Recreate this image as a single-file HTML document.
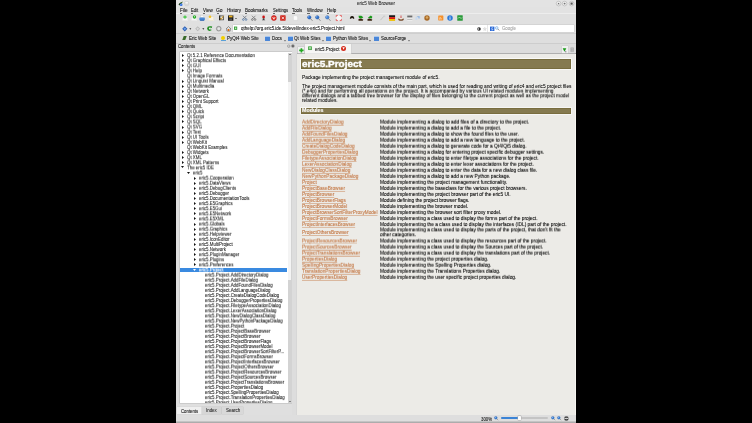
<!DOCTYPE html>
<html><head><meta charset="utf-8"><style>
html,body{margin:0;padding:0;background:#000;width:752px;height:423px;overflow:hidden;}
body{position:relative;font-family:"Liberation Sans", sans-serif;}
.t{position:absolute;white-space:nowrap;transform-origin:0 50%;-webkit-text-stroke:0.1px currentColor;}
#txt{position:absolute;left:0;top:0;width:752px;height:423px;will-change:transform;}
.tr .t{-webkit-text-stroke:0.08px currentColor;}
</style></head><body>
<div style="position:absolute;left:176px;top:0px;width:400px;height:423px;background:#dcdcdc;"></div>
<div style="position:absolute;left:176px;top:0px;width:400px;height:7px;background:#e3e3e3;"></div>
<div style="position:absolute;left:176px;top:7px;width:400px;height:7px;background:#e2e2e2;"></div>
<div style="position:absolute;left:176px;top:14px;width:400px;height:10px;background:#e0e0e0;"></div>
<div style="position:absolute;left:176px;top:13.1px;width:400px;height:0.6px;background:#ededed;"></div>
<div style="position:absolute;left:176px;top:23.5px;width:400px;height:0.6px;background:#cfcfcf;"></div>
<div style="position:absolute;left:176px;top:24px;width:400px;height:9.5px;background:#e0e0e0;"></div>
<div style="position:absolute;left:176px;top:33.3px;width:400px;height:0.6px;background:#cfcfcf;"></div>
<div style="position:absolute;left:176px;top:33.8px;width:400px;height:9.7px;background:#dedede;"></div>
<div style="position:absolute;left:176px;top:43px;width:400px;height:0.6px;background:#cdcdcd;"></div>
<div style="position:absolute;left:176px;top:43.8px;width:121px;height:377.7px;background:#dfdfdf;"></div>
<div style="position:absolute;left:179.5px;top:52px;width:112px;height:351.4px;background:#ffffff;box-shadow:0 0 0 0.5px #b8b8b8;"></div>
<div style="position:absolute;left:287.5px;top:52.5px;width:4px;height:350.5px;background:#d3d3d3;"></div>
<div style="position:absolute;left:287.6px;top:82px;width:3.8px;height:198px;background:#f4f4f4;"></div>
<div style="position:absolute;left:179.8px;top:267.8px;width:107.5px;height:4.6px;background:#3a8ae0;"></div>
<div style="position:absolute;left:177.2px;top:407px;width:24.8px;height:7px;background:#efefef;box-shadow:0 0 0 0.3px #d0d0d0;"></div>
<div style="position:absolute;left:202.2px;top:407.3px;width:19px;height:7px;background:#d6d6d6;box-shadow:0 0 0 0.4px #c2c2c2;"></div>
<div style="position:absolute;left:221.9px;top:407.3px;width:21.6px;height:7px;background:#d9d9d9;box-shadow:0 0 0 0.4px #c2c2c2;"></div>
<div style="position:absolute;left:292px;top:43.8px;width:5px;height:377.7px;background:#dddddd;"></div>
<div style="position:absolute;left:297px;top:43.8px;width:279px;height:10px;background:#dcdcdc;"></div>
<div style="position:absolute;left:297px;top:52.9px;width:279px;height:0.9px;background:#9a9a9a;"></div>
<div style="position:absolute;left:305px;top:44px;width:46px;height:9.8px;background:#f6f6f4;box-shadow:0 0 0 0.4px #c8c8c8;"></div>
<div style="position:absolute;left:297.6px;top:47px;width:6.4px;height:6.3px;background:#f0f0f0;box-shadow:0 0 0 0.4px #c0c0c0;"></div>
<div style="position:absolute;left:296.8px;top:53.8px;width:278px;height:361.2px;background:#ecebe7;box-shadow:0 0 0 0.4px #cfcfcf;"></div>
<div style="position:absolute;left:574.6px;top:53.8px;width:1.2px;height:361px;background:#f6f5f1;"></div>
<div style="position:absolute;left:301.2px;top:58.7px;width:269.8px;height:9.9px;background:#857a50;box-shadow:0 0 0 0.9px rgba(255,255,255,0.75), inset 0 0 0 0.8px #736838;"></div>
<div style="position:absolute;left:301.2px;top:107.9px;width:269.8px;height:5.7px;background:#857a50;box-shadow:0 0 0 0.9px rgba(255,255,255,0.6), inset 0 0 0 0.7px #766a3a;"></div>
<div style="position:absolute;left:176px;top:415px;width:400px;height:6.4px;background:#dedede;"></div>
<div style="position:absolute;left:176px;top:421.4px;width:400px;height:1.6px;background:#a9a9a9;background:linear-gradient(#d0d0d0,#a0a0a0);"></div>
<div style="position:absolute;left:501px;top:417.4px;width:47px;height:1.7px;background:#c4c4c4;border-radius:1px;"></div>
<div style="position:absolute;left:501px;top:417.4px;width:18.5px;height:1.7px;background:#3b84d6;border-radius:1px;"></div>
<div style="position:absolute;left:517.5px;top:416.2px;width:3.5px;height:4px;background:#fafafa;box-shadow:0 0 0 0.4px #aaa;border-radius:0.5px;"></div>
<div style="position:absolute;left:179.7px;top:12.6px;width:2.2px;height:0.45px;background:#666;"></div>
<div style="position:absolute;left:191.1px;top:12.6px;width:2.2px;height:0.45px;background:#666;"></div>
<div style="position:absolute;left:202.79999999999998px;top:12.6px;width:2.2px;height:0.45px;background:#666;"></div>
<div style="position:absolute;left:216.6px;top:12.6px;width:2.2px;height:0.45px;background:#666;"></div>
<div style="position:absolute;left:245.2px;top:12.6px;width:2.2px;height:0.45px;background:#666;"></div>
<div style="position:absolute;left:272.7px;top:12.6px;width:2.2px;height:0.45px;background:#666;"></div>
<div style="position:absolute;left:292.4px;top:12.6px;width:2.2px;height:0.45px;background:#666;"></div>
<div style="position:absolute;left:307.09999999999997px;top:12.6px;width:3px;height:0.45px;background:#666;"></div>
<div style="position:absolute;left:326.9px;top:12.6px;width:2.2px;height:0.45px;background:#666;"></div>
<div style="position:absolute;left:233.4px;top:24.8px;width:255px;height:7.5px;background:#ffffff;box-shadow:0 0 0 0.4px #c4c4c4;"></div>
<div style="position:absolute;left:488.2px;top:24.8px;width:86.2px;height:7.5px;background:#ffffff;box-shadow:0 0 0 0.4px #c4c4c4;"></div>
<svg style="position:absolute;left:182.29999999999998px;top:53.5px;overflow:visible" width="2.0" height="3.0" viewBox="0 0 12 12" preserveAspectRatio="none"><path d="M0 0 L12 6 L0 12Z" fill="#111"/></svg>
<svg style="position:absolute;left:182.29999999999998px;top:58.5px;overflow:visible" width="2.0" height="3.0" viewBox="0 0 12 12" preserveAspectRatio="none"><path d="M0 0 L12 6 L0 12Z" fill="#111"/></svg>
<svg style="position:absolute;left:182.29999999999998px;top:63.5px;overflow:visible" width="2.0" height="3.0" viewBox="0 0 12 12" preserveAspectRatio="none"><path d="M0 0 L12 6 L0 12Z" fill="#111"/></svg>
<svg style="position:absolute;left:182.29999999999998px;top:68.5px;overflow:visible" width="2.0" height="3.0" viewBox="0 0 12 12" preserveAspectRatio="none"><path d="M0 0 L12 6 L0 12Z" fill="#111"/></svg>
<svg style="position:absolute;left:182.29999999999998px;top:79.5px;overflow:visible" width="2.0" height="3.0" viewBox="0 0 12 12" preserveAspectRatio="none"><path d="M0 0 L12 6 L0 12Z" fill="#111"/></svg>
<svg style="position:absolute;left:182.29999999999998px;top:84.5px;overflow:visible" width="2.0" height="3.0" viewBox="0 0 12 12" preserveAspectRatio="none"><path d="M0 0 L12 6 L0 12Z" fill="#111"/></svg>
<svg style="position:absolute;left:182.29999999999998px;top:89.5px;overflow:visible" width="2.0" height="3.0" viewBox="0 0 12 12" preserveAspectRatio="none"><path d="M0 0 L12 6 L0 12Z" fill="#111"/></svg>
<svg style="position:absolute;left:182.29999999999998px;top:94.5px;overflow:visible" width="2.0" height="3.0" viewBox="0 0 12 12" preserveAspectRatio="none"><path d="M0 0 L12 6 L0 12Z" fill="#111"/></svg>
<svg style="position:absolute;left:182.29999999999998px;top:99.5px;overflow:visible" width="2.0" height="3.0" viewBox="0 0 12 12" preserveAspectRatio="none"><path d="M0 0 L12 6 L0 12Z" fill="#111"/></svg>
<svg style="position:absolute;left:182.29999999999998px;top:104.5px;overflow:visible" width="2.0" height="3.0" viewBox="0 0 12 12" preserveAspectRatio="none"><path d="M0 0 L12 6 L0 12Z" fill="#111"/></svg>
<svg style="position:absolute;left:182.29999999999998px;top:109.5px;overflow:visible" width="2.0" height="3.0" viewBox="0 0 12 12" preserveAspectRatio="none"><path d="M0 0 L12 6 L0 12Z" fill="#111"/></svg>
<svg style="position:absolute;left:182.29999999999998px;top:114.5px;overflow:visible" width="2.0" height="3.0" viewBox="0 0 12 12" preserveAspectRatio="none"><path d="M0 0 L12 6 L0 12Z" fill="#111"/></svg>
<svg style="position:absolute;left:182.29999999999998px;top:119.5px;overflow:visible" width="2.0" height="3.0" viewBox="0 0 12 12" preserveAspectRatio="none"><path d="M0 0 L12 6 L0 12Z" fill="#111"/></svg>
<svg style="position:absolute;left:182.29999999999998px;top:125.5px;overflow:visible" width="2.0" height="3.0" viewBox="0 0 12 12" preserveAspectRatio="none"><path d="M0 0 L12 6 L0 12Z" fill="#111"/></svg>
<svg style="position:absolute;left:182.29999999999998px;top:130.5px;overflow:visible" width="2.0" height="3.0" viewBox="0 0 12 12" preserveAspectRatio="none"><path d="M0 0 L12 6 L0 12Z" fill="#111"/></svg>
<svg style="position:absolute;left:182.29999999999998px;top:135.5px;overflow:visible" width="2.0" height="3.0" viewBox="0 0 12 12" preserveAspectRatio="none"><path d="M0 0 L12 6 L0 12Z" fill="#111"/></svg>
<svg style="position:absolute;left:182.29999999999998px;top:140.5px;overflow:visible" width="2.0" height="3.0" viewBox="0 0 12 12" preserveAspectRatio="none"><path d="M0 0 L12 6 L0 12Z" fill="#111"/></svg>
<svg style="position:absolute;left:182.29999999999998px;top:150.5px;overflow:visible" width="2.0" height="3.0" viewBox="0 0 12 12" preserveAspectRatio="none"><path d="M0 0 L12 6 L0 12Z" fill="#111"/></svg>
<svg style="position:absolute;left:182.29999999999998px;top:155.5px;overflow:visible" width="2.0" height="3.0" viewBox="0 0 12 12" preserveAspectRatio="none"><path d="M0 0 L12 6 L0 12Z" fill="#111"/></svg>
<svg style="position:absolute;left:182.29999999999998px;top:160.5px;overflow:visible" width="2.0" height="3.0" viewBox="0 0 12 12" preserveAspectRatio="none"><path d="M0 0 L12 6 L0 12Z" fill="#111"/></svg>
<svg style="position:absolute;left:181.0px;top:166.1px;overflow:visible" width="3.0" height="2.0" viewBox="0 0 12 12" preserveAspectRatio="none"><path d="M0 0 L12 0 L6 12Z" fill="#111"/></svg>
<svg style="position:absolute;left:187.0px;top:172.1px;overflow:visible" width="3.0" height="2.0" viewBox="0 0 12 12" preserveAspectRatio="none"><path d="M0 0 L12 0 L6 12Z" fill="#111"/></svg>
<svg style="position:absolute;left:194.29999999999998px;top:176.5px;overflow:visible" width="2.0" height="3.0" viewBox="0 0 12 12" preserveAspectRatio="none"><path d="M0 0 L12 6 L0 12Z" fill="#111"/></svg>
<svg style="position:absolute;left:194.29999999999998px;top:181.5px;overflow:visible" width="2.0" height="3.0" viewBox="0 0 12 12" preserveAspectRatio="none"><path d="M0 0 L12 6 L0 12Z" fill="#111"/></svg>
<svg style="position:absolute;left:194.29999999999998px;top:186.5px;overflow:visible" width="2.0" height="3.0" viewBox="0 0 12 12" preserveAspectRatio="none"><path d="M0 0 L12 6 L0 12Z" fill="#111"/></svg>
<svg style="position:absolute;left:194.29999999999998px;top:191.5px;overflow:visible" width="2.0" height="3.0" viewBox="0 0 12 12" preserveAspectRatio="none"><path d="M0 0 L12 6 L0 12Z" fill="#111"/></svg>
<svg style="position:absolute;left:194.29999999999998px;top:196.5px;overflow:visible" width="2.0" height="3.0" viewBox="0 0 12 12" preserveAspectRatio="none"><path d="M0 0 L12 6 L0 12Z" fill="#111"/></svg>
<svg style="position:absolute;left:194.29999999999998px;top:201.5px;overflow:visible" width="2.0" height="3.0" viewBox="0 0 12 12" preserveAspectRatio="none"><path d="M0 0 L12 6 L0 12Z" fill="#111"/></svg>
<svg style="position:absolute;left:194.29999999999998px;top:206.5px;overflow:visible" width="2.0" height="3.0" viewBox="0 0 12 12" preserveAspectRatio="none"><path d="M0 0 L12 6 L0 12Z" fill="#111"/></svg>
<svg style="position:absolute;left:194.29999999999998px;top:211.5px;overflow:visible" width="2.0" height="3.0" viewBox="0 0 12 12" preserveAspectRatio="none"><path d="M0 0 L12 6 L0 12Z" fill="#111"/></svg>
<svg style="position:absolute;left:194.29999999999998px;top:216.5px;overflow:visible" width="2.0" height="3.0" viewBox="0 0 12 12" preserveAspectRatio="none"><path d="M0 0 L12 6 L0 12Z" fill="#111"/></svg>
<svg style="position:absolute;left:194.29999999999998px;top:222.5px;overflow:visible" width="2.0" height="3.0" viewBox="0 0 12 12" preserveAspectRatio="none"><path d="M0 0 L12 6 L0 12Z" fill="#111"/></svg>
<svg style="position:absolute;left:194.29999999999998px;top:227.5px;overflow:visible" width="2.0" height="3.0" viewBox="0 0 12 12" preserveAspectRatio="none"><path d="M0 0 L12 6 L0 12Z" fill="#111"/></svg>
<svg style="position:absolute;left:194.29999999999998px;top:232.5px;overflow:visible" width="2.0" height="3.0" viewBox="0 0 12 12" preserveAspectRatio="none"><path d="M0 0 L12 6 L0 12Z" fill="#111"/></svg>
<svg style="position:absolute;left:194.29999999999998px;top:237.5px;overflow:visible" width="2.0" height="3.0" viewBox="0 0 12 12" preserveAspectRatio="none"><path d="M0 0 L12 6 L0 12Z" fill="#111"/></svg>
<svg style="position:absolute;left:194.29999999999998px;top:242.5px;overflow:visible" width="2.0" height="3.0" viewBox="0 0 12 12" preserveAspectRatio="none"><path d="M0 0 L12 6 L0 12Z" fill="#111"/></svg>
<svg style="position:absolute;left:194.29999999999998px;top:247.5px;overflow:visible" width="2.0" height="3.0" viewBox="0 0 12 12" preserveAspectRatio="none"><path d="M0 0 L12 6 L0 12Z" fill="#111"/></svg>
<svg style="position:absolute;left:194.29999999999998px;top:252.5px;overflow:visible" width="2.0" height="3.0" viewBox="0 0 12 12" preserveAspectRatio="none"><path d="M0 0 L12 6 L0 12Z" fill="#111"/></svg>
<svg style="position:absolute;left:194.29999999999998px;top:257.5px;overflow:visible" width="2.0" height="3.0" viewBox="0 0 12 12" preserveAspectRatio="none"><path d="M0 0 L12 6 L0 12Z" fill="#111"/></svg>
<svg style="position:absolute;left:194.29999999999998px;top:262.5px;overflow:visible" width="2.0" height="3.0" viewBox="0 0 12 12" preserveAspectRatio="none"><path d="M0 0 L12 6 L0 12Z" fill="#111"/></svg>
<svg style="position:absolute;left:193.0px;top:269.1px;overflow:visible" width="3.0" height="2.0" viewBox="0 0 12 12" preserveAspectRatio="none"><path d="M0 0 L12 0 L6 12Z" fill="#fff"/></svg>
<svg style="position:absolute;left:177.6px;top:0.8px;overflow:visible" width="5.6" height="5.4" viewBox="0 0 12 12"><path d="M1 8 Q3 3 11 1 Q8 6 3 10Z" fill="#2a5a18"/><path d="M1.5 8.5 Q3 5 6 4 L3 9Z" fill="#141a08"/><circle cx="6.8" cy="8.4" r="3" fill="#2a6ae0"/><circle cx="6.2" cy="7.6" r="1.2" fill="#7ab0ff"/></svg>
<svg style="position:absolute;left:184.2px;top:0.9px;overflow:visible" width="5.4" height="5.2" viewBox="0 0 12 12"><circle cx="6" cy="6" r="5.5" fill="#d8d8d8" stroke="#b8b8b8" stroke-width="0.6"/><ellipse cx="6" cy="4" rx="3.5" ry="2.2" fill="#f4f4f4"/></svg>
<svg style="position:absolute;left:555.6px;top:0.9px;overflow:visible" width="5.2" height="5.2" viewBox="0 0 12 12"><circle cx="6" cy="6" r="5.4" fill="#efefef" stroke="#9a9a9a" stroke-width="1"/><path d="M3.5 7.5 L6 4 L8.5 7.5Z" fill="#555"/></svg>
<svg style="position:absolute;left:562.4px;top:0.9px;overflow:visible" width="5.2" height="5.2" viewBox="0 0 12 12"><circle cx="6" cy="6" r="5.4" fill="#efefef" stroke="#9a9a9a" stroke-width="1"/><circle cx="6" cy="6" r="2.2" fill="#777"/></svg>
<svg style="position:absolute;left:569.3px;top:0.9px;overflow:visible" width="5.2" height="5.2" viewBox="0 0 12 12"><circle cx="6" cy="6" r="5.4" fill="#efefef" stroke="#9a9a9a" stroke-width="1"/><rect x="3.5" y="3.5" width="5" height="5" fill="#555"/></svg>
<svg style="position:absolute;left:182.4px;top:14.8px;overflow:visible" width="6" height="6" viewBox="0 0 12 12"><rect x="0.5" y="5" width="11" height="6.5" fill="#f6f6f6" stroke="#d8d8d8" stroke-width="0.6"/><circle cx="6" cy="4" r="3.2" fill="#3cc03c"/><circle cx="6" cy="4" r="1.3" fill="#8fe08f"/></svg>
<svg style="position:absolute;left:190.9px;top:14.8px;overflow:visible" width="6" height="6" viewBox="0 0 12 12"><rect x="0.5" y="5" width="11" height="6.5" fill="#f6f6f6" stroke="#d8d8d8" stroke-width="0.6"/><circle cx="7" cy="4" r="3.3" fill="#22aa22"/><rect x="6.4" y="1.8" width="1.2" height="3" fill="#fff"/></svg>
<svg style="position:absolute;left:199px;top:14.8px;overflow:visible" width="6.2" height="6" viewBox="0 0 12 12"><rect x="3" y="1" width="6" height="4" fill="#fafafa" stroke="#bbb" stroke-width="0.5"/><rect x="0.5" y="5" width="11" height="5.5" rx="1" fill="#4a8ad8"/><rect x="2" y="9.5" width="8" height="2" fill="#2a62b0"/></svg>
<svg style="position:absolute;left:207.8px;top:14.8px;overflow:visible" width="6" height="6" viewBox="0 0 12 12"><rect x="0.5" y="3.5" width="11" height="8" fill="#f8f2e0" stroke="#d8d0b0" stroke-width="0.5"/><circle cx="4" cy="3.5" r="2.5" fill="#f2c020"/></svg>
<svg style="position:absolute;left:218.8px;top:15.0px;overflow:visible" width="5" height="5.8" viewBox="0 0 12 12"><rect x="0.5" y="0.5" width="11" height="11" fill="#2a2a24"/><rect x="2" y="2" width="8" height="8" fill="#e8e4d8"/><path d="M2.5 6 L5 9.5 L11 1" stroke="#c89020" stroke-width="2.2" fill="none"/><rect x="0.5" y="0.5" width="2.5" height="11" fill="#1a1a14"/></svg>
<svg style="position:absolute;left:228px;top:14.8px;overflow:visible" width="5.4" height="6.2" viewBox="0 0 12 12"><rect x="0" y="0" width="12" height="12" fill="#202020"/><rect x="2" y="0.5" width="8" height="4" fill="#e8b020"/><rect x="3" y="7" width="6" height="5" fill="#555"/></svg>
<svg style="position:absolute;left:242.4px;top:14.8px;overflow:visible" width="5.4" height="6" viewBox="0 0 12 12"><path d="M2 1 L10 9 M10 1 L2 9" stroke="#606a78" stroke-width="1.6"/><circle cx="3" cy="9.5" r="2" fill="none" stroke="#3a66a0" stroke-width="1.2"/><circle cx="9" cy="9.5" r="2" fill="none" stroke="#3a66a0" stroke-width="1.2"/></svg>
<svg style="position:absolute;left:250.8px;top:14.8px;overflow:visible" width="5.4" height="6" viewBox="0 0 12 12"><path d="M2 1 L10 9 M10 1 L2 9" stroke="#707070" stroke-width="1.6"/><circle cx="3" cy="9.5" r="2" fill="none" stroke="#555" stroke-width="1.2"/><circle cx="9" cy="9.5" r="2" fill="none" stroke="#555" stroke-width="1.2"/></svg>
<svg style="position:absolute;left:260.6px;top:14.8px;overflow:visible" width="5.2" height="6" viewBox="0 0 12 12"><path d="M2 11 L6 7 L10 11Z" fill="#404040"/><rect x="4" y="5" width="4" height="3" fill="#505050"/><circle cx="6" cy="3.5" r="3" fill="#cc1010"/></svg>
<svg style="position:absolute;left:270.7px;top:14.8px;overflow:visible" width="5.8" height="6" viewBox="0 0 12 12"><circle cx="6" cy="6" r="5.6" fill="#c81818"/><circle cx="6" cy="6" r="4" fill="#e03a2a"/><path d="M3.5 4 L6 8.5 L8.5 4" stroke="#fff" stroke-width="1.5" fill="none"/></svg>
<svg style="position:absolute;left:279.6px;top:14.8px;overflow:visible" width="5.8" height="6" viewBox="0 0 12 12"><rect x="0.3" y="0.5" width="11.4" height="11" rx="1" fill="#d02a20"/><path d="M3.5 3.5 L8.5 8.5 M8.5 3.5 L3.5 8.5" stroke="#fff" stroke-width="1.5"/></svg>
<svg style="position:absolute;left:293.4px;top:14.8px;overflow:visible" width="5" height="6" viewBox="0 0 12 12"><path d="M1 0.5 H8 L11 3.5 V11.5 H1Z" fill="#fbfbfb" stroke="#c8c8c8" stroke-width="0.7"/></svg>
<svg style="position:absolute;left:307px;top:14.8px;overflow:visible" width="6" height="6.2" viewBox="0 0 12 12"><line x1="6" y1="6" x2="11" y2="11.5" stroke="#7a7a7a" stroke-width="1.6"/><circle cx="4.5" cy="4.5" r="3.6" fill="#2a6ac8" stroke="#1a4a90" stroke-width="0.5"/><circle cx="3.5" cy="3.5" r="1.2" fill="#a8d0ff"/></svg>
<svg style="position:absolute;left:315.2px;top:14.8px;overflow:visible" width="6" height="6.2" viewBox="0 0 12 12"><line x1="6" y1="6" x2="11" y2="11.5" stroke="#7a7a7a" stroke-width="1.6"/><circle cx="4.5" cy="4.5" r="3.6" fill="#3070c8" stroke="#1a4a90" stroke-width="0.5"/><circle cx="3.5" cy="3.5" r="1.2" fill="#a8d0ff"/></svg>
<svg style="position:absolute;left:325px;top:14.8px;overflow:visible" width="6" height="6.2" viewBox="0 0 12 12"><line x1="6" y1="6" x2="11" y2="11.5" stroke="#7a7a7a" stroke-width="1.6"/><circle cx="4.5" cy="4.5" r="3.6" fill="#4a88d8" stroke="#1a4a90" stroke-width="0.5"/><circle cx="3.5" cy="3.5" r="1.2" fill="#a8d0ff"/></svg>
<svg style="position:absolute;left:336px;top:14.8px;overflow:visible" width="5.6" height="6" viewBox="0 0 12 12"><rect x="0.5" y="0.5" width="11" height="11" fill="#f8f8f8"/><path d="M0.5 4 V0.5 H4 M8 0.5 H11.5 V4 M11.5 8 V11.5 H8 M4 11.5 H0.5 V8" stroke="#e04040" stroke-width="1.6" fill="none"/></svg>
<svg style="position:absolute;left:349px;top:15.4px;overflow:visible" width="6.2" height="5" viewBox="0 0 12 12"><path d="M0.5 8 Q2 2 6 2.5 Q10 2 11.5 8 Q9.5 10.5 7.5 8 Q6 6.5 4.5 8 Q2.5 10.5 0.5 8Z" fill="#201810"/></svg>
<svg style="position:absolute;left:358.4px;top:14.8px;overflow:visible" width="5.8" height="6.2" viewBox="0 0 12 12"><path d="M1 1 L7 1 L11 4 L8 7 L2 6Z" fill="#1a9a1a"/><path d="M1 8 L5 7 L11 9 L10 11.5 L1 11.5Z" fill="#3a2410"/></svg>
<svg style="position:absolute;left:367px;top:14.8px;overflow:visible" width="5.8" height="6.2" viewBox="0 0 12 12"><path d="M3 4 L8 0.8 L11 3 L10 7 L2 6Z" fill="#1a9a1a"/><path d="M1 8 L5 7 L11 9 L10 11.5 L1 11.5Z" fill="#3a2410"/></svg>
<svg style="position:absolute;left:380px;top:14.8px;overflow:visible" width="5.2" height="6" viewBox="0 0 12 12"><path d="M1 11 L9 2" stroke="#b0b0b0" stroke-width="1.4"/><path d="M8 1 L11 1 L11 4" stroke="#c0c0c0" stroke-width="1" fill="none"/></svg>
<svg style="position:absolute;left:388.8px;top:14.8px;overflow:visible" width="6.2" height="6" viewBox="0 0 12 12"><rect x="0" y="0.5" width="12" height="3.8" fill="#181818"/><rect x="0" y="4.3" width="12" height="3.8" fill="#d81a10"/><rect x="0" y="8.1" width="12" height="3.7" fill="#f0c000"/></svg>
<svg style="position:absolute;left:397.6px;top:14.8px;overflow:visible" width="6" height="6" viewBox="0 0 12 12"><ellipse cx="6" cy="8.5" rx="5.6" ry="3" fill="#6a3a18"/><ellipse cx="6" cy="7" rx="4" ry="2" fill="#f0e8e0"/><rect x="5.3" y="1" width="1.4" height="5" fill="#d02020"/></svg>
<svg style="position:absolute;left:406.8px;top:14.8px;overflow:visible" width="5.6" height="6" viewBox="0 0 12 12"><rect x="0.5" y="0.5" width="11" height="11" fill="#f4f4f4"/><rect x="0.5" y="1" width="11" height="2.2" fill="#303030"/><rect x="0.5" y="5" width="11" height="1" fill="#707070"/><rect x="0.5" y="8" width="11" height="1" fill="#707070"/></svg>
<svg style="position:absolute;left:415px;top:14.8px;overflow:visible" width="5.6" height="6" viewBox="0 0 12 12"><rect x="1" y="4" width="4" height="6" fill="#c8daf0"/><rect x="6.5" y="2" width="4.5" height="5" fill="#a8c4e8"/><path d="M4 3 L8 3" stroke="#6a9ad0" stroke-width="1"/></svg>
<svg style="position:absolute;left:424px;top:14.8px;overflow:visible" width="6" height="6" viewBox="0 0 12 12"><circle cx="6" cy="6" r="5.4" fill="#a86a28"/><circle cx="6" cy="5" r="2.6" fill="#d8a860"/></svg>
<svg style="position:absolute;left:438px;top:14.8px;overflow:visible" width="5.6" height="6" viewBox="0 0 12 12"><rect x="0.5" y="0.5" width="11" height="11" rx="1" fill="#f5902a"/><circle cx="4" cy="8" r="1.2" fill="#fff"/><path d="M3 4.5 Q7.5 4.5 7.5 9" stroke="#fff" stroke-width="1" fill="none"/></svg>
<svg style="position:absolute;left:446.8px;top:14.8px;overflow:visible" width="6" height="6" viewBox="0 0 12 12"><circle cx="6" cy="6" r="5.5" fill="#2a78d8"/><rect x="5.2" y="4.5" width="1.6" height="5" fill="#fff"/><circle cx="6" cy="2.8" r="0.9" fill="#fff"/></svg>
<svg style="position:absolute;left:457px;top:14.8px;overflow:visible" width="6" height="6" viewBox="0 0 12 12"><rect x="0.5" y="0.5" width="11" height="11" rx="1" fill="#2a9a3a"/><path d="M2 7 L5 4 L8 7 L10 5" stroke="#e8ffe8" stroke-width="1.2" fill="none"/></svg>
<div style="position:absolute;left:235.4px;top:17.6px;width:0;height:0;border-top:1.3px solid #222;border-left:1.1px solid transparent;border-right:1.1px solid transparent"></div>
<svg style="position:absolute;left:182.2px;top:26px;overflow:visible" width="5.6" height="5.2" viewBox="0 0 12 11"><path d="M0.5 6 L6 0.5 L11.5 6 L6 11.5Z" fill="#2a5ab0"/><path d="M3 6 L6 3 L9 6 L6 9Z" fill="#6aa4ec"/></svg>
<svg style="position:absolute;left:194.6px;top:26px;overflow:visible" width="5.4" height="5.2" viewBox="0 0 12 11"><path d="M0.5 6 L6 0.5 L11.5 6 L6 11.5Z" fill="#b8b8b8"/><path d="M3 6 L6 3 L9 6 L6 9Z" fill="#dadada"/></svg>
<svg style="position:absolute;left:207px;top:26px;overflow:visible" width="5.2" height="5.2" viewBox="0 0 12 12"><circle cx="6" cy="6" r="5.6" fill="#1a8a1a"/><circle cx="6.5" cy="6" r="2.3" fill="#e6e6e6"/><rect x="8" y="3.5" width="4" height="5" fill="#e6e6e6"/><path d="M7 0.5 L12 1 L10.5 5Z" fill="#1a8a1a"/></svg>
<svg style="position:absolute;left:215.5px;top:26px;overflow:visible" width="5.5" height="5.4" viewBox="0 0 12 12"><circle cx="6" cy="6" r="5.3" fill="#b0b0b0" stroke="#6a6a6a" stroke-width="1"/><circle cx="6" cy="6" r="3.2" fill="#e4e4e4"/></svg>
<svg style="position:absolute;left:225.5px;top:25.8px;overflow:visible" width="5" height="5.6" viewBox="0 0 12 12"><path d="M6 0.5 L11.5 6 H10 V11.5 H2 V6 H0.5Z" fill="#e0e0e0" stroke="#404040" stroke-width="1.2"/><rect x="4.3" y="6.5" width="3.4" height="5" fill="#e06a10"/></svg>
<svg style="position:absolute;left:234.2px;top:26px;overflow:visible" width="3.2" height="4.4" viewBox="0 0 12 12"><rect x="0" y="0" width="12" height="12" fill="#2a9a2a"/><rect x="3" y="3" width="6" height="6" fill="#bfe8bf"/></svg>
<svg style="position:absolute;left:477.4px;top:26.8px;overflow:visible" width="4" height="4" viewBox="0 0 12 12"><circle cx="6" cy="6" r="5.5" fill="#2a2a2a"/><circle cx="4" cy="6" r="2.5" fill="#e8e8e8"/></svg>
<svg style="position:absolute;left:483.2px;top:26.8px;overflow:visible" width="3.6" height="3.8" viewBox="0 0 12 12"><path d="M6 0.5 L7.8 4.5 L11.5 4.8 L8.8 7.5 L9.6 11.5 L6 9.5 L2.4 11.5 L3.2 7.5 L0.5 4.8 L4.2 4.5Z" fill="#e8e8e8" stroke="#a8a8a8" stroke-width="0.8"/></svg>
<svg style="position:absolute;left:489.6px;top:26px;overflow:visible" width="4.4" height="5.6" viewBox="0 0 12 12"><rect x="0" y="0" width="12" height="12" fill="#2a6ad8"/><path d="M8 3 Q4 2 4 5 Q8 6 8 9 Q4 10 3 8" stroke="#fff" stroke-width="1.4" fill="none"/></svg>
<svg style="position:absolute;left:494.6px;top:26px;overflow:visible" width="4.6" height="5" viewBox="0 0 12 12"><line x1="6" y1="6" x2="11" y2="11" stroke="#555" stroke-width="1.8"/><circle cx="4.5" cy="4.5" r="3.5" fill="#dff0ff" stroke="#4a8ad0" stroke-width="1.2"/></svg>
<svg style="position:absolute;left:189.29999999999998px;top:27.6px;overflow:visible" width="2.6" height="2" viewBox="0 0 12 12"><path d="M0 1 H12 L6 11Z" fill="#222"/></svg>
<svg style="position:absolute;left:201.89999999999998px;top:27.6px;overflow:visible" width="2.6" height="2" viewBox="0 0 12 12"><path d="M0 1 H12 L6 11Z" fill="#222"/></svg>
<div style="position:absolute;left:183.2px;top:36.3px;width:3.4px;height:4px;background:#3a6a2a;transform:skewX(-20deg);"></div>
<div style="position:absolute;left:221.4px;top:35.8px;width:4px;height:4px;border-radius:50%;background:#f2d000;"></div>
<div style="position:absolute;left:221.2px;top:40.2px;width:4.4px;height:0.6px;background:#5aa0d8;"></div>
<div style="position:absolute;left:264.8px;top:36.2px;width:5.2px;height:4.4px;background:#5a90e0;border-radius:0.5px;background:linear-gradient(#a8c8f0 0 25%,#4a86d8 25%);"></div>
<div style="position:absolute;left:288px;top:36.2px;width:5.2px;height:4.4px;background:#5a90e0;border-radius:0.5px;background:linear-gradient(#a8c8f0 0 25%,#4a86d8 25%);"></div>
<div style="position:absolute;left:325.9px;top:36.2px;width:5.2px;height:4.4px;background:#5a90e0;border-radius:0.5px;background:linear-gradient(#a8c8f0 0 25%,#4a86d8 25%);"></div>
<div style="position:absolute;left:374px;top:36.2px;width:5.2px;height:4.4px;background:#5a90e0;border-radius:0.5px;background:linear-gradient(#a8c8f0 0 25%,#4a86d8 25%);"></div>
<svg style="position:absolute;left:283.6px;top:40.2px;overflow:visible" width="2" height="1.6" viewBox="0 0 12 12"><path d="M0 1 H12 L6 11Z" fill="#222"/></svg>
<svg style="position:absolute;left:322px;top:40.2px;overflow:visible" width="2" height="1.6" viewBox="0 0 12 12"><path d="M0 1 H12 L6 11Z" fill="#222"/></svg>
<svg style="position:absolute;left:369px;top:40.2px;overflow:visible" width="2" height="1.6" viewBox="0 0 12 12"><path d="M0 1 H12 L6 11Z" fill="#222"/></svg>
<svg style="position:absolute;left:407.6px;top:40.2px;overflow:visible" width="2" height="1.6" viewBox="0 0 12 12"><path d="M0 1 H12 L6 11Z" fill="#222"/></svg>
<svg style="position:absolute;left:286.9px;top:44.2px;overflow:visible" width="3.6" height="4.2" viewBox="0 0 12 12"><circle cx="6" cy="6" r="5.5" fill="#9a9a9a"/><circle cx="6" cy="6" r="2.6" fill="#e8e8e8"/></svg>
<svg style="position:absolute;left:290.9px;top:44.2px;overflow:visible" width="3.8" height="4.2" viewBox="0 0 12 12"><circle cx="6" cy="6" r="5.5" fill="#8a8a8a"/><rect x="3.5" y="3.5" width="5" height="5" fill="#5a5a5a"/></svg>
<svg style="position:absolute;left:298.6px;top:47.5px;overflow:visible" width="4.8" height="4.8" viewBox="0 0 12 12"><path d="M4 0.5 H8 V4 H11.5 V8 H8 V11.5 H4 V8 H0.5 V4 H4Z" fill="#22a822"/></svg>
<svg style="position:absolute;left:308px;top:46px;overflow:visible" width="4" height="4.4" viewBox="0 0 12 12"><rect x="0.5" y="0.5" width="11" height="11" fill="#3aa03a"/><rect x="3" y="3" width="6" height="6" fill="#c8ecc8"/><rect x="4.5" y="4.5" width="3" height="3" fill="#3aa03a"/></svg>
<div style="position:absolute;left:341.0px;top:45.9px;width:5.2px;height:5.2px;border-radius:50%;background:#d42a1a;"></div>
<div style="position:absolute;left:342.4px;top:47.3px;width:2.4px;height:2.4px;background:#fff;clip-path:polygon(0 0,100% 0,50% 100%)"></div>
<div style="position:absolute;left:561.7px;top:46.2px;width:6.8px;height:7.2px;background:#f0f0f0;box-shadow:0 0 0 0.3px #c8c8c8;"></div>
<svg style="position:absolute;left:562.4px;top:47.6px;overflow:visible" width="5" height="4" viewBox="0 0 12 12"><path d="M0.5 0.5 H11.5 L6 11Z" fill="#1a9a1a"/><circle cx="10" cy="11" r="1.5" fill="#222"/></svg>
<svg style="position:absolute;left:570px;top:46.8px;overflow:visible" width="4.6" height="5.4" viewBox="0 0 12 12"><path d="M2 1 H9 V11 H2Z" fill="#d0d0d0" stroke="#8a8a8a" stroke-width="1"/><path d="M4 3 V9 M7 3 V9" stroke="#777" stroke-width="0.8"/></svg>
<svg style="position:absolute;left:493.6px;top:416px;overflow:visible" width="4.6" height="4.6" viewBox="0 0 12 12"><line x1="6" y1="6" x2="11" y2="11" stroke="#8a8a8a" stroke-width="1.8"/><circle cx="4.8" cy="4.8" r="3.8" fill="#3a80d8" stroke="#1a4a90" stroke-width="0.6"/><circle cx="3.8" cy="3.8" r="1.2" fill="#b8d8ff"/></svg>
<svg style="position:absolute;left:550.6px;top:416px;overflow:visible" width="4.6" height="4.6" viewBox="0 0 12 12"><line x1="6" y1="6" x2="11" y2="11" stroke="#8a8a8a" stroke-width="1.8"/><circle cx="4.8" cy="4.8" r="3.8" fill="#3a80d8" stroke="#1a4a90" stroke-width="0.6"/><circle cx="3.8" cy="3.8" r="1.2" fill="#b8d8ff"/></svg>
<svg style="position:absolute;left:557.4px;top:416px;overflow:visible" width="4.6" height="4.6" viewBox="0 0 12 12"><line x1="6" y1="6" x2="11" y2="11" stroke="#8a8a8a" stroke-width="1.8"/><circle cx="4.8" cy="4.8" r="3.8" fill="#3a80d8" stroke="#1a4a90" stroke-width="0.6"/><circle cx="3.8" cy="3.8" r="1.2" fill="#b8d8ff"/></svg>
<svg style="position:absolute;left:564.2px;top:415.8px;overflow:visible" width="4.8" height="4.8" viewBox="0 0 12 12"><circle cx="6" cy="6" r="5.6" fill="#3a3a3a"/><rect x="1" y="4.8" width="10" height="2.4" fill="#e0e0e0"/><path d="M6 1 V3.5 M6 8.5 V11" stroke="#ddd" stroke-width="0.8"/></svg>
<div style="position:absolute;left:288.6px;top:54.2px;width:0;height:0;border-bottom:1.2px solid #333;border-left:1px solid transparent;border-right:1px solid transparent"></div>
<div style="position:absolute;left:288.6px;top:401px;width:0;height:0;border-top:1.2px solid #333;border-left:1px solid transparent;border-right:1px solid transparent"></div>
<div style="position:absolute;left:179px;top:52px;width:108.5px;height:351.2px;overflow:hidden;will-change:transform" class="tr">
<div style="position:absolute;left:0;top:0;width:108px;height:352px;transform:translate3d(0,0.100px,0) rotate(0.0001deg)"><span id="t25" class="t" style="left:8.10px;top:1.00px;font-size:4.8px;line-height:5.52px;color:#1e1e1e;transform:scaleX(0.9158);">Qt 5.2.1 Reference Documentation</span></div>
<div style="position:absolute;left:0;top:0;width:108px;height:352px;transform:translate3d(0,0.205px,0) rotate(0.0001deg)"><span id="t26" class="t" style="left:8.10px;top:6.00px;font-size:4.8px;line-height:5.52px;color:#1e1e1e;transform:scaleX(0.9159);">Qt Graphical Effects</span></div>
<div style="position:absolute;left:0;top:0;width:108px;height:352px;transform:translate3d(0,0.310px,0) rotate(0.0001deg)"><span id="t27" class="t" style="left:8.10px;top:11.00px;font-size:4.8px;line-height:5.52px;color:#1e1e1e;transform:scaleX(0.9159);">Qt GUI</span></div>
<div style="position:absolute;left:0;top:0;width:108px;height:352px;transform:translate3d(0,0.415px,0) rotate(0.0001deg)"><span id="t28" class="t" style="left:8.10px;top:16.00px;font-size:4.8px;line-height:5.52px;color:#1e1e1e;transform:scaleX(0.9159);">Qt Help</span></div>
<div style="position:absolute;left:0;top:0;width:108px;height:352px;transform:translate3d(0,0.520px,0) rotate(0.0001deg)"><span id="t29" class="t" style="left:8.10px;top:21.00px;font-size:4.8px;line-height:5.52px;color:#1e1e1e;transform:scaleX(0.9159);">Qt Image Formats</span></div>
<div style="position:absolute;left:0;top:0;width:108px;height:352px;transform:translate3d(0,0.625px,0) rotate(0.0001deg)"><span id="t30" class="t" style="left:8.10px;top:26.00px;font-size:4.8px;line-height:5.52px;color:#1e1e1e;transform:scaleX(0.9159);">Qt Linguist Manual</span></div>
<div style="position:absolute;left:0;top:0;width:108px;height:352px;transform:translate3d(0,0.730px,0) rotate(0.0001deg)"><span id="t31" class="t" style="left:8.10px;top:31.00px;font-size:4.8px;line-height:5.52px;color:#1e1e1e;transform:scaleX(0.9159);">Qt Multimedia</span></div>
<div style="position:absolute;left:0;top:0;width:108px;height:352px;transform:translate3d(0,0.835px,0) rotate(0.0001deg)"><span id="t32" class="t" style="left:8.10px;top:36.00px;font-size:4.8px;line-height:5.52px;color:#1e1e1e;transform:scaleX(0.9159);">Qt Network</span></div>
<div style="position:absolute;left:0;top:0;width:108px;height:352px;transform:translate3d(0,0.940px,0) rotate(0.0001deg)"><span id="t33" class="t" style="left:8.10px;top:41.00px;font-size:4.8px;line-height:5.52px;color:#1e1e1e;transform:scaleX(0.9159);">Qt OpenGL</span></div>
<div style="position:absolute;left:0;top:0;width:108px;height:352px;transform:translate3d(0,0.045px,0) rotate(0.0001deg)"><span id="t34" class="t" style="left:8.10px;top:47.00px;font-size:4.8px;line-height:5.52px;color:#1e1e1e;transform:scaleX(0.9159);">Qt Print Support</span></div>
<div style="position:absolute;left:0;top:0;width:108px;height:352px;transform:translate3d(0,0.150px,0) rotate(0.0001deg)"><span id="t35" class="t" style="left:8.10px;top:52.00px;font-size:4.8px;line-height:5.52px;color:#1e1e1e;transform:scaleX(0.9159);">Qt QML</span></div>
<div style="position:absolute;left:0;top:0;width:108px;height:352px;transform:translate3d(0,0.255px,0) rotate(0.0001deg)"><span id="t36" class="t" style="left:8.10px;top:57.00px;font-size:4.8px;line-height:5.52px;color:#1e1e1e;transform:scaleX(0.9159);">Qt Quick</span></div>
<div style="position:absolute;left:0;top:0;width:108px;height:352px;transform:translate3d(0,0.360px,0) rotate(0.0001deg)"><span id="t37" class="t" style="left:8.10px;top:62.00px;font-size:4.8px;line-height:5.52px;color:#1e1e1e;transform:scaleX(0.9159);">Qt Script</span></div>
<div style="position:absolute;left:0;top:0;width:108px;height:352px;transform:translate3d(0,0.465px,0) rotate(0.0001deg)"><span id="t38" class="t" style="left:8.10px;top:67.00px;font-size:4.8px;line-height:5.52px;color:#1e1e1e;transform:scaleX(0.9159);">Qt SQL</span></div>
<div style="position:absolute;left:0;top:0;width:108px;height:352px;transform:translate3d(0,0.570px,0) rotate(0.0001deg)"><span id="t39" class="t" style="left:8.10px;top:72.00px;font-size:4.8px;line-height:5.52px;color:#1e1e1e;transform:scaleX(0.9159);">Qt SVG</span></div>
<div style="position:absolute;left:0;top:0;width:108px;height:352px;transform:translate3d(0,0.675px,0) rotate(0.0001deg)"><span id="t40" class="t" style="left:8.10px;top:77.00px;font-size:4.8px;line-height:5.52px;color:#1e1e1e;transform:scaleX(0.9159);">Qt Test</span></div>
<div style="position:absolute;left:0;top:0;width:108px;height:352px;transform:translate3d(0,0.780px,0) rotate(0.0001deg)"><span id="t41" class="t" style="left:8.10px;top:82.00px;font-size:4.8px;line-height:5.52px;color:#1e1e1e;transform:scaleX(0.9159);">Qt UI Tools</span></div>
<div style="position:absolute;left:0;top:0;width:108px;height:352px;transform:translate3d(0,0.885px,0) rotate(0.0001deg)"><span id="t42" class="t" style="left:8.10px;top:87.00px;font-size:4.8px;line-height:5.52px;color:#1e1e1e;transform:scaleX(0.9159);">Qt WebKit</span></div>
<div style="position:absolute;left:0;top:0;width:108px;height:352px;transform:translate3d(0,0.990px,0) rotate(0.0001deg)"><span id="t43" class="t" style="left:8.10px;top:92.00px;font-size:4.8px;line-height:5.52px;color:#1e1e1e;transform:scaleX(0.9159);">Qt WebKit Examples</span></div>
<div style="position:absolute;left:0;top:0;width:108px;height:352px;transform:translate3d(0,0.095px,0) rotate(0.0001deg)"><span id="t44" class="t" style="left:8.10px;top:98.00px;font-size:4.8px;line-height:5.52px;color:#1e1e1e;transform:scaleX(0.9159);">Qt Widgets</span></div>
<div style="position:absolute;left:0;top:0;width:108px;height:352px;transform:translate3d(0,0.200px,0) rotate(0.0001deg)"><span id="t45" class="t" style="left:8.10px;top:103.00px;font-size:4.8px;line-height:5.52px;color:#1e1e1e;transform:scaleX(0.9159);">Qt XML</span></div>
<div style="position:absolute;left:0;top:0;width:108px;height:352px;transform:translate3d(0,0.305px,0) rotate(0.0001deg)"><span id="t46" class="t" style="left:8.10px;top:108.00px;font-size:4.8px;line-height:5.52px;color:#1e1e1e;transform:scaleX(0.9159);">Qt XML Patterns</span></div>
<div style="position:absolute;left:0;top:0;width:108px;height:352px;transform:translate3d(0,0.410px,0) rotate(0.0001deg)"><span id="t47" class="t" style="left:8.10px;top:113.00px;font-size:4.8px;line-height:5.52px;color:#1e1e1e;transform:scaleX(0.9159);">The eric5 IDE</span></div>
<div style="position:absolute;left:0;top:0;width:108px;height:352px;transform:translate3d(0,0.515px,0) rotate(0.0001deg)"><span id="t48" class="t" style="left:14.10px;top:118.00px;font-size:4.8px;line-height:5.52px;color:#1e1e1e;transform:scaleX(0.9159);">eric5</span></div>
<div style="position:absolute;left:0;top:0;width:108px;height:352px;transform:translate3d(0,0.620px,0) rotate(0.0001deg)"><span id="t49" class="t" style="left:20.10px;top:123.00px;font-size:4.8px;line-height:5.52px;color:#1e1e1e;transform:scaleX(0.9159);">eric5.Cooperation</span></div>
<div style="position:absolute;left:0;top:0;width:108px;height:352px;transform:translate3d(0,0.725px,0) rotate(0.0001deg)"><span id="t50" class="t" style="left:20.10px;top:128.00px;font-size:4.8px;line-height:5.52px;color:#1e1e1e;transform:scaleX(0.9159);">eric5.DataViews</span></div>
<div style="position:absolute;left:0;top:0;width:108px;height:352px;transform:translate3d(0,0.830px,0) rotate(0.0001deg)"><span id="t51" class="t" style="left:20.10px;top:133.00px;font-size:4.8px;line-height:5.52px;color:#1e1e1e;transform:scaleX(0.9159);">eric5.DebugClients</span></div>
<div style="position:absolute;left:0;top:0;width:108px;height:352px;transform:translate3d(0,0.935px,0) rotate(0.0001deg)"><span id="t52" class="t" style="left:20.10px;top:138.00px;font-size:4.8px;line-height:5.52px;color:#1e1e1e;transform:scaleX(0.9159);">eric5.Debugger</span></div>
<div style="position:absolute;left:0;top:0;width:108px;height:352px;transform:translate3d(0,0.040px,0) rotate(0.0001deg)"><span id="t53" class="t" style="left:20.10px;top:144.00px;font-size:4.8px;line-height:5.52px;color:#1e1e1e;transform:scaleX(0.9159);">eric5.DocumentationTools</span></div>
<div style="position:absolute;left:0;top:0;width:108px;height:352px;transform:translate3d(0,0.145px,0) rotate(0.0001deg)"><span id="t54" class="t" style="left:20.10px;top:149.00px;font-size:4.8px;line-height:5.52px;color:#1e1e1e;transform:scaleX(0.9159);">eric5.E5Graphics</span></div>
<div style="position:absolute;left:0;top:0;width:108px;height:352px;transform:translate3d(0,0.250px,0) rotate(0.0001deg)"><span id="t55" class="t" style="left:20.10px;top:154.00px;font-size:4.8px;line-height:5.52px;color:#1e1e1e;transform:scaleX(0.9159);">eric5.E5Gui</span></div>
<div style="position:absolute;left:0;top:0;width:108px;height:352px;transform:translate3d(0,0.355px,0) rotate(0.0001deg)"><span id="t56" class="t" style="left:20.10px;top:159.00px;font-size:4.8px;line-height:5.52px;color:#1e1e1e;transform:scaleX(0.9159);">eric5.E5Network</span></div>
<div style="position:absolute;left:0;top:0;width:108px;height:352px;transform:translate3d(0,0.460px,0) rotate(0.0001deg)"><span id="t57" class="t" style="left:20.10px;top:164.00px;font-size:4.8px;line-height:5.52px;color:#1e1e1e;transform:scaleX(0.9159);">eric5.E5XML</span></div>
<div style="position:absolute;left:0;top:0;width:108px;height:352px;transform:translate3d(0,0.565px,0) rotate(0.0001deg)"><span id="t58" class="t" style="left:20.10px;top:169.00px;font-size:4.8px;line-height:5.52px;color:#1e1e1e;transform:scaleX(0.9159);">eric5.Globals</span></div>
<div style="position:absolute;left:0;top:0;width:108px;height:352px;transform:translate3d(0,0.670px,0) rotate(0.0001deg)"><span id="t59" class="t" style="left:20.10px;top:174.00px;font-size:4.8px;line-height:5.52px;color:#1e1e1e;transform:scaleX(0.9159);">eric5.Graphics</span></div>
<div style="position:absolute;left:0;top:0;width:108px;height:352px;transform:translate3d(0,0.775px,0) rotate(0.0001deg)"><span id="t60" class="t" style="left:20.10px;top:179.00px;font-size:4.8px;line-height:5.52px;color:#1e1e1e;transform:scaleX(0.9159);">eric5.Helpviewer</span></div>
<div style="position:absolute;left:0;top:0;width:108px;height:352px;transform:translate3d(0,0.880px,0) rotate(0.0001deg)"><span id="t61" class="t" style="left:20.10px;top:184.00px;font-size:4.8px;line-height:5.52px;color:#1e1e1e;transform:scaleX(0.9159);">eric5.IconEditor</span></div>
<div style="position:absolute;left:0;top:0;width:108px;height:352px;transform:translate3d(0,0.985px,0) rotate(0.0001deg)"><span id="t62" class="t" style="left:20.10px;top:189.00px;font-size:4.8px;line-height:5.52px;color:#1e1e1e;transform:scaleX(0.9159);">eric5.MultiProject</span></div>
<div style="position:absolute;left:0;top:0;width:108px;height:352px;transform:translate3d(0,0.090px,0) rotate(0.0001deg)"><span id="t63" class="t" style="left:20.10px;top:195.00px;font-size:4.8px;line-height:5.52px;color:#1e1e1e;transform:scaleX(0.9159);">eric5.Network</span></div>
<div style="position:absolute;left:0;top:0;width:108px;height:352px;transform:translate3d(0,0.195px,0) rotate(0.0001deg)"><span id="t64" class="t" style="left:20.10px;top:200.00px;font-size:4.8px;line-height:5.52px;color:#1e1e1e;transform:scaleX(0.9159);">eric5.PluginManager</span></div>
<div style="position:absolute;left:0;top:0;width:108px;height:352px;transform:translate3d(0,0.300px,0) rotate(0.0001deg)"><span id="t65" class="t" style="left:20.10px;top:205.00px;font-size:4.8px;line-height:5.52px;color:#1e1e1e;transform:scaleX(0.9159);">eric5.Plugins</span></div>
<div style="position:absolute;left:0;top:0;width:108px;height:352px;transform:translate3d(0,0.405px,0) rotate(0.0001deg)"><span id="t66" class="t" style="left:20.10px;top:210.00px;font-size:4.8px;line-height:5.52px;color:#1e1e1e;transform:scaleX(0.9159);">eric5.Preferences</span></div>
<div style="position:absolute;left:0;top:0;width:108px;height:352px;transform:translate3d(0,0.510px,0) rotate(0.0001deg)"><span id="t67" class="t" style="left:20.10px;top:215.00px;font-size:4.8px;line-height:5.52px;color:#ffffff;transform:scaleX(0.9159);">eric5.Project</span></div>
<div style="position:absolute;left:0;top:0;width:108px;height:352px;transform:translate3d(0,0.615px,0) rotate(0.0001deg)"><span id="t68" class="t" style="left:26.10px;top:220.00px;font-size:4.8px;line-height:5.52px;color:#1e1e1e;transform:scaleX(0.9159);">eric5.Project.AddDirectoryDialog</span></div>
<div style="position:absolute;left:0;top:0;width:108px;height:352px;transform:translate3d(0,0.720px,0) rotate(0.0001deg)"><span id="t69" class="t" style="left:26.10px;top:225.00px;font-size:4.8px;line-height:5.52px;color:#1e1e1e;transform:scaleX(0.9159);">eric5.Project.AddFileDialog</span></div>
<div style="position:absolute;left:0;top:0;width:108px;height:352px;transform:translate3d(0,0.825px,0) rotate(0.0001deg)"><span id="t70" class="t" style="left:26.10px;top:230.00px;font-size:4.8px;line-height:5.52px;color:#1e1e1e;transform:scaleX(0.9159);">eric5.Project.AddFoundFilesDialog</span></div>
<div style="position:absolute;left:0;top:0;width:108px;height:352px;transform:translate3d(0,0.930px,0) rotate(0.0001deg)"><span id="t71" class="t" style="left:26.10px;top:235.00px;font-size:4.8px;line-height:5.52px;color:#1e1e1e;transform:scaleX(0.9159);">eric5.Project.AddLanguageDialog</span></div>
<div style="position:absolute;left:0;top:0;width:108px;height:352px;transform:translate3d(0,0.035px,0) rotate(0.0001deg)"><span id="t72" class="t" style="left:26.10px;top:241.00px;font-size:4.8px;line-height:5.52px;color:#1e1e1e;transform:scaleX(0.9159);">eric5.Project.CreateDialogCodeDialog</span></div>
<div style="position:absolute;left:0;top:0;width:108px;height:352px;transform:translate3d(0,0.140px,0) rotate(0.0001deg)"><span id="t73" class="t" style="left:26.10px;top:246.00px;font-size:4.8px;line-height:5.52px;color:#1e1e1e;transform:scaleX(0.9159);">eric5.Project.DebuggerPropertiesDialog</span></div>
<div style="position:absolute;left:0;top:0;width:108px;height:352px;transform:translate3d(0,0.245px,0) rotate(0.0001deg)"><span id="t74" class="t" style="left:26.10px;top:251.00px;font-size:4.8px;line-height:5.52px;color:#1e1e1e;transform:scaleX(0.9159);">eric5.Project.FiletypeAssociationDialog</span></div>
<div style="position:absolute;left:0;top:0;width:108px;height:352px;transform:translate3d(0,0.350px,0) rotate(0.0001deg)"><span id="t75" class="t" style="left:26.10px;top:256.00px;font-size:4.8px;line-height:5.52px;color:#1e1e1e;transform:scaleX(0.9159);">eric5.Project.LexerAssociationDialog</span></div>
<div style="position:absolute;left:0;top:0;width:108px;height:352px;transform:translate3d(0,0.455px,0) rotate(0.0001deg)"><span id="t76" class="t" style="left:26.10px;top:261.00px;font-size:4.8px;line-height:5.52px;color:#1e1e1e;transform:scaleX(0.9159);">eric5.Project.NewDialogClassDialog</span></div>
<div style="position:absolute;left:0;top:0;width:108px;height:352px;transform:translate3d(0,0.560px,0) rotate(0.0001deg)"><span id="t77" class="t" style="left:26.10px;top:266.00px;font-size:4.8px;line-height:5.52px;color:#1e1e1e;transform:scaleX(0.9159);">eric5.Project.NewPythonPackageDialog</span></div>
<div style="position:absolute;left:0;top:0;width:108px;height:352px;transform:translate3d(0,0.665px,0) rotate(0.0001deg)"><span id="t78" class="t" style="left:26.10px;top:271.00px;font-size:4.8px;line-height:5.52px;color:#1e1e1e;transform:scaleX(0.9159);">eric5.Project.Project</span></div>
<div style="position:absolute;left:0;top:0;width:108px;height:352px;transform:translate3d(0,0.770px,0) rotate(0.0001deg)"><span id="t79" class="t" style="left:26.10px;top:276.00px;font-size:4.8px;line-height:5.52px;color:#1e1e1e;transform:scaleX(0.9159);">eric5.Project.ProjectBaseBrowser</span></div>
<div style="position:absolute;left:0;top:0;width:108px;height:352px;transform:translate3d(0,0.875px,0) rotate(0.0001deg)"><span id="t80" class="t" style="left:26.10px;top:281.00px;font-size:4.8px;line-height:5.52px;color:#1e1e1e;transform:scaleX(0.9159);">eric5.Project.ProjectBrowser</span></div>
<div style="position:absolute;left:0;top:0;width:108px;height:352px;transform:translate3d(0,0.980px,0) rotate(0.0001deg)"><span id="t81" class="t" style="left:26.10px;top:286.00px;font-size:4.8px;line-height:5.52px;color:#1e1e1e;transform:scaleX(0.9159);">eric5.Project.ProjectBrowserFlags</span></div>
<div style="position:absolute;left:0;top:0;width:108px;height:352px;transform:translate3d(0,0.085px,0) rotate(0.0001deg)"><span id="t82" class="t" style="left:26.10px;top:292.00px;font-size:4.8px;line-height:5.52px;color:#1e1e1e;transform:scaleX(0.9159);">eric5.Project.ProjectBrowserModel</span></div>
<div style="position:absolute;left:0;top:0;width:108px;height:352px;transform:translate3d(0,0.190px,0) rotate(0.0001deg)"><span id="t83" class="t" style="left:26.10px;top:297.00px;font-size:4.8px;line-height:5.52px;color:#1e1e1e;transform:scaleX(0.9159);">eric5.Project.ProjectBrowserSortFilterP...</span></div>
<div style="position:absolute;left:0;top:0;width:108px;height:352px;transform:translate3d(0,0.295px,0) rotate(0.0001deg)"><span id="t84" class="t" style="left:26.10px;top:302.00px;font-size:4.8px;line-height:5.52px;color:#1e1e1e;transform:scaleX(0.9159);">eric5.Project.ProjectFormsBrowser</span></div>
<div style="position:absolute;left:0;top:0;width:108px;height:352px;transform:translate3d(0,0.400px,0) rotate(0.0001deg)"><span id="t85" class="t" style="left:26.10px;top:307.00px;font-size:4.8px;line-height:5.52px;color:#1e1e1e;transform:scaleX(0.9159);">eric5.Project.ProjectInterfacesBrowser</span></div>
<div style="position:absolute;left:0;top:0;width:108px;height:352px;transform:translate3d(0,0.505px,0) rotate(0.0001deg)"><span id="t86" class="t" style="left:26.10px;top:312.00px;font-size:4.8px;line-height:5.52px;color:#1e1e1e;transform:scaleX(0.9159);">eric5.Project.ProjectOthersBrowser</span></div>
<div style="position:absolute;left:0;top:0;width:108px;height:352px;transform:translate3d(0,0.610px,0) rotate(0.0001deg)"><span id="t87" class="t" style="left:26.10px;top:317.00px;font-size:4.8px;line-height:5.52px;color:#1e1e1e;transform:scaleX(0.9159);">eric5.Project.ProjectResourcesBrowser</span></div>
<div style="position:absolute;left:0;top:0;width:108px;height:352px;transform:translate3d(0,0.715px,0) rotate(0.0001deg)"><span id="t88" class="t" style="left:26.10px;top:322.00px;font-size:4.8px;line-height:5.52px;color:#1e1e1e;transform:scaleX(0.9159);">eric5.Project.ProjectSourcesBrowser</span></div>
<div style="position:absolute;left:0;top:0;width:108px;height:352px;transform:translate3d(0,0.820px,0) rotate(0.0001deg)"><span id="t89" class="t" style="left:26.10px;top:327.00px;font-size:4.8px;line-height:5.52px;color:#1e1e1e;transform:scaleX(0.9159);">eric5.Project.ProjectTranslationsBrowser</span></div>
<div style="position:absolute;left:0;top:0;width:108px;height:352px;transform:translate3d(0,0.925px,0) rotate(0.0001deg)"><span id="t90" class="t" style="left:26.10px;top:332.00px;font-size:4.8px;line-height:5.52px;color:#1e1e1e;transform:scaleX(0.9159);">eric5.Project.PropertiesDialog</span></div>
<div style="position:absolute;left:0;top:0;width:108px;height:352px;transform:translate3d(0,0.030px,0) rotate(0.0001deg)"><span id="t91" class="t" style="left:26.10px;top:338.00px;font-size:4.8px;line-height:5.52px;color:#1e1e1e;transform:scaleX(0.9159);">eric5.Project.SpellingPropertiesDialog</span></div>
<div style="position:absolute;left:0;top:0;width:108px;height:352px;transform:translate3d(0,0.135px,0) rotate(0.0001deg)"><span id="t92" class="t" style="left:26.10px;top:343.00px;font-size:4.8px;line-height:5.52px;color:#1e1e1e;transform:scaleX(0.9159);">eric5.Project.TranslationPropertiesDialog</span></div>
<div style="position:absolute;left:0;top:0;width:108px;height:352px;transform:translate3d(0,0.240px,0) rotate(0.0001deg)"><span id="t93" class="t" style="left:26.10px;top:348.00px;font-size:4.8px;line-height:5.52px;color:#1e1e1e;transform:scaleX(0.9159);">eric5.Project.UserPropertiesDialog</span></div>
</div>
<div id="txt">
<span id="t0" class="t" style="left:357.10px;top:1.00px;font-size:4.6px;line-height:5.29px;color:#333;transform:scaleX(0.9785);">eric5 Web Browser</span>
<span id="t1" class="t" style="left:179.50px;top:8.00px;font-size:4.8px;line-height:5.52px;color:#1a1a1a;transform:scaleX(0.9697);">File</span>
<span id="t2" class="t" style="left:190.90px;top:8.00px;font-size:4.8px;line-height:5.52px;color:#1a1a1a;transform:scaleX(0.8574);">Edit</span>
<span id="t3" class="t" style="left:202.60px;top:8.00px;font-size:4.8px;line-height:5.52px;color:#1a1a1a;transform:scaleX(0.9503);">View</span>
<span id="t4" class="t" style="left:216.40px;top:8.00px;font-size:4.8px;line-height:5.52px;color:#1a1a1a;transform:scaleX(1.0302);">Go</span>
<span id="t5" class="t" style="left:226.90px;top:8.00px;font-size:4.8px;line-height:5.52px;color:#1a1a1a;transform:scaleX(0.9372);">History</span>
<span id="t6" class="t" style="left:245.00px;top:8.00px;font-size:4.8px;line-height:5.52px;color:#1a1a1a;transform:scaleX(0.9458);">Bookmarks</span>
<span id="t7" class="t" style="left:272.50px;top:8.00px;font-size:4.8px;line-height:5.52px;color:#1a1a1a;transform:scaleX(0.8764);">Settings</span>
<span id="t8" class="t" style="left:292.20px;top:8.00px;font-size:4.8px;line-height:5.52px;color:#1a1a1a;transform:scaleX(0.9015);">Tools</span>
<span id="t9" class="t" style="left:306.90px;top:8.00px;font-size:4.8px;line-height:5.52px;color:#1a1a1a;transform:scaleX(0.9143);">Window</span>
<span id="t10" class="t" style="left:326.70px;top:8.00px;font-size:4.8px;line-height:5.52px;color:#1a1a1a;transform:scaleX(0.9418);">Help</span>
<span id="t11" class="t" style="left:240.90px;top:26.00px;font-size:4.6px;line-height:5.29px;color:#222;transform:scaleX(0.9682);">qthelp://org.eric5.ide.5/devel/index-eric5.Project.html</span>
<span id="t12" class="t" style="left:502.00px;top:26.00px;font-size:4.6px;line-height:5.29px;color:#a8a8a8;transform:scaleX(0.9442);">Google</span>
<span id="t13" class="t" style="left:188.60px;top:36.00px;font-size:4.6px;line-height:5.29px;color:#1a1a1a;transform:scaleX(0.9838);">Eric Web Site</span>
<span id="t14" class="t" style="left:227.20px;top:36.00px;font-size:4.6px;line-height:5.29px;color:#1a1a1a;transform:scaleX(0.9752);">PyQt4 Web Site</span>
<span id="t15" class="t" style="left:272.00px;top:36.00px;font-size:4.6px;line-height:5.29px;color:#1a1a1a;transform:scaleX(0.9552);">Docs</span>
<span id="t16" class="t" style="left:293.90px;top:36.00px;font-size:4.6px;line-height:5.29px;color:#1a1a1a;transform:scaleX(0.9858);">Qt Web Sites</span>
<span id="t17" class="t" style="left:332.50px;top:36.00px;font-size:4.6px;line-height:5.29px;color:#1a1a1a;transform:scaleX(0.9660);">Python Web Sites</span>
<span id="t18" class="t" style="left:380.60px;top:36.00px;font-size:4.6px;line-height:5.29px;color:#1a1a1a;transform:scaleX(0.9525);">SourceForge</span>
<span id="t19" class="t" style="left:178.00px;top:44.00px;font-size:4.6px;line-height:5.29px;color:#222;transform:scaleX(0.9353);">Contents</span>
<span id="t20" class="t" style="left:180.80px;top:409.00px;font-size:4.6px;line-height:5.29px;color:#222;transform:scaleX(0.9353);">Contents</span>
<span id="t21" class="t" style="left:206.30px;top:408.00px;font-size:4.6px;line-height:5.29px;color:#333;transform:scaleX(0.9511);">Index</span>
<span id="t22" class="t" style="left:225.50px;top:408.00px;font-size:4.6px;line-height:5.29px;color:#333;transform:scaleX(0.9820);">Search</span>
<span id="t23" class="t" style="left:314.80px;top:47.00px;font-size:4.6px;line-height:5.29px;color:#222;transform:scaleX(0.9557);">eric5.Project</span>
<span id="t24" class="t" style="left:481.00px;top:417.00px;font-size:4.6px;line-height:5.29px;color:#222;transform:scaleX(0.9362);">300%</span>
<span id="t94" class="t" style="left:302.00px;top:59.00px;font-size:9px;line-height:10.35px;color:#ffffff;font-weight:bold;transform:scaleX(1.1086);-webkit-text-stroke:0.35px #fff;">eric5.Project</span>
<span id="t95" class="t" style="left:301.50px;top:75.00px;font-size:4.6px;line-height:5.29px;color:#000;transform:scaleX(1.0476);-webkit-text-stroke:0.05px #000;">Package implementing the project management module of eric5.</span>
<span id="t96" class="t" style="left:301.50px;top:84.00px;font-size:4.6px;line-height:5.29px;color:#000;transform:scaleX(1.0512);-webkit-text-stroke:0.05px #000;">The project management module consists of the main part, which is used for reading and writing of eric4 and eric5 project files</span>
<div style="position:absolute;left:0;top:0;width:752px;height:423px;transform:translate3d(0,0.650px,0) rotate(0.0001deg)"><span id="t97" class="t" style="left:301.50px;top:88.00px;font-size:4.6px;line-height:5.29px;color:#000;transform:scaleX(1.0512);-webkit-text-stroke:0.05px #000;">(*.e4p) and for performing all operations on the project. It is accompanied by various UI related modules implementing</span></div>
<div style="position:absolute;left:0;top:0;width:752px;height:423px;transform:translate3d(0,0.300px,0) rotate(0.0001deg)"><span id="t98" class="t" style="left:301.50px;top:93.00px;font-size:4.6px;line-height:5.29px;color:#000;transform:scaleX(1.0512);-webkit-text-stroke:0.05px #000;">different dialogs and a tabbed tree browser for the display of files belonging to the current project as well as the project model</span></div>
<div style="position:absolute;left:0;top:0;width:752px;height:423px;transform:translate3d(0,0.950px,0) rotate(0.0001deg)"><span id="t99" class="t" style="left:301.50px;top:97.00px;font-size:4.6px;line-height:5.29px;color:#000;transform:scaleX(1.0512);-webkit-text-stroke:0.05px #000;">related modules.</span></div>
<span id="t100" class="t" style="left:302.00px;top:108.00px;font-size:4.6px;line-height:5.29px;color:#ffffff;font-weight:bold;transform:scaleX(1.1534);">Modules</span>
<div style="position:absolute;left:0;top:0;width:752px;height:423px;transform:translate3d(0,0.600px,0) rotate(0.0001deg)"><span id="t101" class="t" style="left:302.30px;top:119.00px;font-size:4.6px;line-height:5.29px;color:#c47a48;transform:scaleX(1.0511);text-decoration:underline;text-decoration-color:rgba(196,122,72,0.45);">AddDirectoryDialog</span></div>
<div style="position:absolute;left:0;top:0;width:752px;height:423px;transform:translate3d(0,0.600px,0) rotate(0.0001deg)"><span id="t102" class="t" style="left:379.80px;top:119.00px;font-size:4.6px;line-height:5.29px;color:#000;transform:scaleX(1.0546);-webkit-text-stroke:0.07px #000;">Module implementing a dialog to add files of a directory to the project.</span></div>
<div style="position:absolute;left:0;top:0;width:752px;height:423px;transform:translate3d(0,0.630px,0) rotate(0.0001deg)"><span id="t103" class="t" style="left:302.30px;top:125.00px;font-size:4.6px;line-height:5.29px;color:#c47a48;transform:scaleX(1.0354);text-decoration:underline;text-decoration-color:rgba(196,122,72,0.45);">AddFileDialog</span></div>
<div style="position:absolute;left:0;top:0;width:752px;height:423px;transform:translate3d(0,0.630px,0) rotate(0.0001deg)"><span id="t104" class="t" style="left:379.80px;top:125.00px;font-size:4.6px;line-height:5.29px;color:#000;transform:scaleX(1.0512);-webkit-text-stroke:0.07px #000;">Module implementing a dialog to add a file to the project.</span></div>
<div style="position:absolute;left:0;top:0;width:752px;height:423px;transform:translate3d(0,0.660px,0) rotate(0.0001deg)"><span id="t105" class="t" style="left:302.30px;top:131.00px;font-size:4.6px;line-height:5.29px;color:#c47a48;transform:scaleX(1.0354);text-decoration:underline;text-decoration-color:rgba(196,122,72,0.45);">AddFoundFilesDialog</span></div>
<div style="position:absolute;left:0;top:0;width:752px;height:423px;transform:translate3d(0,0.660px,0) rotate(0.0001deg)"><span id="t106" class="t" style="left:379.80px;top:131.00px;font-size:4.6px;line-height:5.29px;color:#000;transform:scaleX(1.0512);-webkit-text-stroke:0.07px #000;">Module implementing a dialog to show the found files to the user.</span></div>
<div style="position:absolute;left:0;top:0;width:752px;height:423px;transform:translate3d(0,0.690px,0) rotate(0.0001deg)"><span id="t107" class="t" style="left:302.30px;top:137.00px;font-size:4.6px;line-height:5.29px;color:#c47a48;transform:scaleX(1.0354);text-decoration:underline;text-decoration-color:rgba(196,122,72,0.45);">AddLanguageDialog</span></div>
<div style="position:absolute;left:0;top:0;width:752px;height:423px;transform:translate3d(0,0.690px,0) rotate(0.0001deg)"><span id="t108" class="t" style="left:379.80px;top:137.00px;font-size:4.6px;line-height:5.29px;color:#000;transform:scaleX(1.0512);-webkit-text-stroke:0.07px #000;">Module implementing a dialog to add a new language to the project.</span></div>
<div style="position:absolute;left:0;top:0;width:752px;height:423px;transform:translate3d(0,0.720px,0) rotate(0.0001deg)"><span id="t109" class="t" style="left:302.30px;top:143.00px;font-size:4.6px;line-height:5.29px;color:#c47a48;transform:scaleX(1.0354);text-decoration:underline;text-decoration-color:rgba(196,122,72,0.45);">CreateDialogCodeDialog</span></div>
<div style="position:absolute;left:0;top:0;width:752px;height:423px;transform:translate3d(0,0.720px,0) rotate(0.0001deg)"><span id="t110" class="t" style="left:379.80px;top:143.00px;font-size:4.6px;line-height:5.29px;color:#000;transform:scaleX(1.0512);-webkit-text-stroke:0.07px #000;">Module implementing a dialog to generate code for a Qt4/Qt5 dialog.</span></div>
<div style="position:absolute;left:0;top:0;width:752px;height:423px;transform:translate3d(0,0.750px,0) rotate(0.0001deg)"><span id="t111" class="t" style="left:302.30px;top:149.00px;font-size:4.6px;line-height:5.29px;color:#c47a48;transform:scaleX(1.0354);text-decoration:underline;text-decoration-color:rgba(196,122,72,0.45);">DebuggerPropertiesDialog</span></div>
<div style="position:absolute;left:0;top:0;width:752px;height:423px;transform:translate3d(0,0.750px,0) rotate(0.0001deg)"><span id="t112" class="t" style="left:379.80px;top:149.00px;font-size:4.6px;line-height:5.29px;color:#000;transform:scaleX(1.0512);-webkit-text-stroke:0.07px #000;">Module implementing a dialog for entering project specific debugger settings.</span></div>
<div style="position:absolute;left:0;top:0;width:752px;height:423px;transform:translate3d(0,0.780px,0) rotate(0.0001deg)"><span id="t113" class="t" style="left:302.30px;top:155.00px;font-size:4.6px;line-height:5.29px;color:#c47a48;transform:scaleX(1.0354);text-decoration:underline;text-decoration-color:rgba(196,122,72,0.45);">FiletypeAssociationDialog</span></div>
<div style="position:absolute;left:0;top:0;width:752px;height:423px;transform:translate3d(0,0.780px,0) rotate(0.0001deg)"><span id="t114" class="t" style="left:379.80px;top:155.00px;font-size:4.6px;line-height:5.29px;color:#000;transform:scaleX(1.0512);-webkit-text-stroke:0.07px #000;">Module implementing a dialog to enter filetype associations for the project.</span></div>
<div style="position:absolute;left:0;top:0;width:752px;height:423px;transform:translate3d(0,0.810px,0) rotate(0.0001deg)"><span id="t115" class="t" style="left:302.30px;top:161.00px;font-size:4.6px;line-height:5.29px;color:#c47a48;transform:scaleX(1.0354);text-decoration:underline;text-decoration-color:rgba(196,122,72,0.45);">LexerAssociationDialog</span></div>
<div style="position:absolute;left:0;top:0;width:752px;height:423px;transform:translate3d(0,0.810px,0) rotate(0.0001deg)"><span id="t116" class="t" style="left:379.80px;top:161.00px;font-size:4.6px;line-height:5.29px;color:#000;transform:scaleX(1.0512);-webkit-text-stroke:0.07px #000;">Module implementing a dialog to enter lexer associations for the project.</span></div>
<div style="position:absolute;left:0;top:0;width:752px;height:423px;transform:translate3d(0,0.840px,0) rotate(0.0001deg)"><span id="t117" class="t" style="left:302.30px;top:167.00px;font-size:4.6px;line-height:5.29px;color:#c47a48;transform:scaleX(1.0354);text-decoration:underline;text-decoration-color:rgba(196,122,72,0.45);">NewDialogClassDialog</span></div>
<div style="position:absolute;left:0;top:0;width:752px;height:423px;transform:translate3d(0,0.840px,0) rotate(0.0001deg)"><span id="t118" class="t" style="left:379.80px;top:167.00px;font-size:4.6px;line-height:5.29px;color:#000;transform:scaleX(1.0512);-webkit-text-stroke:0.07px #000;">Module implementing a dialog to enter the data for a new dialog class file.</span></div>
<div style="position:absolute;left:0;top:0;width:752px;height:423px;transform:translate3d(0,0.870px,0) rotate(0.0001deg)"><span id="t119" class="t" style="left:302.30px;top:173.00px;font-size:4.6px;line-height:5.29px;color:#c47a48;transform:scaleX(1.0354);text-decoration:underline;text-decoration-color:rgba(196,122,72,0.45);">NewPythonPackageDialog</span></div>
<div style="position:absolute;left:0;top:0;width:752px;height:423px;transform:translate3d(0,0.870px,0) rotate(0.0001deg)"><span id="t120" class="t" style="left:379.80px;top:173.00px;font-size:4.6px;line-height:5.29px;color:#000;transform:scaleX(1.0512);-webkit-text-stroke:0.07px #000;">Module implementing a dialog to add a new Python package.</span></div>
<div style="position:absolute;left:0;top:0;width:752px;height:423px;transform:translate3d(0,0.900px,0) rotate(0.0001deg)"><span id="t121" class="t" style="left:302.30px;top:179.00px;font-size:4.6px;line-height:5.29px;color:#c47a48;transform:scaleX(1.0354);text-decoration:underline;text-decoration-color:rgba(196,122,72,0.45);">Project</span></div>
<div style="position:absolute;left:0;top:0;width:752px;height:423px;transform:translate3d(0,0.900px,0) rotate(0.0001deg)"><span id="t122" class="t" style="left:379.80px;top:179.00px;font-size:4.6px;line-height:5.29px;color:#000;transform:scaleX(1.0512);-webkit-text-stroke:0.07px #000;">Module implementing the project management functionality.</span></div>
<div style="position:absolute;left:0;top:0;width:752px;height:423px;transform:translate3d(0,0.930px,0) rotate(0.0001deg)"><span id="t123" class="t" style="left:302.30px;top:185.00px;font-size:4.6px;line-height:5.29px;color:#c47a48;transform:scaleX(1.0354);text-decoration:underline;text-decoration-color:rgba(196,122,72,0.45);">ProjectBaseBrowser</span></div>
<div style="position:absolute;left:0;top:0;width:752px;height:423px;transform:translate3d(0,0.930px,0) rotate(0.0001deg)"><span id="t124" class="t" style="left:379.80px;top:185.00px;font-size:4.6px;line-height:5.29px;color:#000;transform:scaleX(1.0512);-webkit-text-stroke:0.07px #000;">Module implementing the baseclass for the various project browsers.</span></div>
<div style="position:absolute;left:0;top:0;width:752px;height:423px;transform:translate3d(0,0.960px,0) rotate(0.0001deg)"><span id="t125" class="t" style="left:302.30px;top:191.00px;font-size:4.6px;line-height:5.29px;color:#c47a48;transform:scaleX(1.0354);text-decoration:underline;text-decoration-color:rgba(196,122,72,0.45);">ProjectBrowser</span></div>
<div style="position:absolute;left:0;top:0;width:752px;height:423px;transform:translate3d(0,0.960px,0) rotate(0.0001deg)"><span id="t126" class="t" style="left:379.80px;top:191.00px;font-size:4.6px;line-height:5.29px;color:#000;transform:scaleX(1.0512);-webkit-text-stroke:0.07px #000;">Module implementing the project browser part of the eric5 UI.</span></div>
<div style="position:absolute;left:0;top:0;width:752px;height:423px;transform:translate3d(0,0.990px,0) rotate(0.0001deg)"><span id="t127" class="t" style="left:302.30px;top:197.00px;font-size:4.6px;line-height:5.29px;color:#c47a48;transform:scaleX(1.0354);text-decoration:underline;text-decoration-color:rgba(196,122,72,0.45);">ProjectBrowserFlags</span></div>
<div style="position:absolute;left:0;top:0;width:752px;height:423px;transform:translate3d(0,0.990px,0) rotate(0.0001deg)"><span id="t128" class="t" style="left:379.80px;top:197.00px;font-size:4.6px;line-height:5.29px;color:#000;transform:scaleX(1.0512);-webkit-text-stroke:0.07px #000;">Module defining the project browser flags.</span></div>
<div style="position:absolute;left:0;top:0;width:752px;height:423px;transform:translate3d(0,0.020px,0) rotate(0.0001deg)"><span id="t129" class="t" style="left:302.30px;top:204.00px;font-size:4.6px;line-height:5.29px;color:#c47a48;transform:scaleX(1.0354);text-decoration:underline;text-decoration-color:rgba(196,122,72,0.45);">ProjectBrowserModel</span></div>
<div style="position:absolute;left:0;top:0;width:752px;height:423px;transform:translate3d(0,0.020px,0) rotate(0.0001deg)"><span id="t130" class="t" style="left:379.80px;top:204.00px;font-size:4.6px;line-height:5.29px;color:#000;transform:scaleX(1.0512);-webkit-text-stroke:0.07px #000;">Module implementing the browser model.</span></div>
<div style="position:absolute;left:0;top:0;width:752px;height:423px;transform:translate3d(0,0.050px,0) rotate(0.0001deg)"><span id="t131" class="t" style="left:302.30px;top:210.00px;font-size:4.6px;line-height:5.29px;color:#c47a48;transform:scaleX(1.0196);text-decoration:underline;text-decoration-color:rgba(196,122,72,0.45);">ProjectBrowserSortFilterProxyModel</span></div>
<div style="position:absolute;left:0;top:0;width:752px;height:423px;transform:translate3d(0,0.050px,0) rotate(0.0001deg)"><span id="t132" class="t" style="left:379.80px;top:210.00px;font-size:4.6px;line-height:5.29px;color:#000;transform:scaleX(1.0512);-webkit-text-stroke:0.07px #000;">Module implementing the browser sort filter proxy model.</span></div>
<div style="position:absolute;left:0;top:0;width:752px;height:423px;transform:translate3d(0,0.080px,0) rotate(0.0001deg)"><span id="t133" class="t" style="left:302.30px;top:216.00px;font-size:4.6px;line-height:5.29px;color:#c47a48;transform:scaleX(1.0354);text-decoration:underline;text-decoration-color:rgba(196,122,72,0.45);">ProjectFormsBrowser</span></div>
<div style="position:absolute;left:0;top:0;width:752px;height:423px;transform:translate3d(0,0.080px,0) rotate(0.0001deg)"><span id="t134" class="t" style="left:379.80px;top:216.00px;font-size:4.6px;line-height:5.29px;color:#000;transform:scaleX(1.0512);-webkit-text-stroke:0.07px #000;">Module implementing a class used to display the forms part of the project.</span></div>
<div style="position:absolute;left:0;top:0;width:752px;height:423px;transform:translate3d(0,0.110px,0) rotate(0.0001deg)"><span id="t135" class="t" style="left:302.30px;top:222.00px;font-size:4.6px;line-height:5.29px;color:#c47a48;transform:scaleX(1.0354);text-decoration:underline;text-decoration-color:rgba(196,122,72,0.45);">ProjectInterfacesBrowser</span></div>
<div style="position:absolute;left:0;top:0;width:752px;height:423px;transform:translate3d(0,0.110px,0) rotate(0.0001deg)"><span id="t136" class="t" style="left:379.80px;top:222.00px;font-size:4.6px;line-height:5.29px;color:#000;transform:scaleX(1.0512);-webkit-text-stroke:0.07px #000;">Module implementing the a class used to display the interfaces (IDL) part of the project.</span></div>
<span id="t137" class="t" style="left:302.30px;top:230.00px;font-size:4.6px;line-height:5.29px;color:#c47a48;transform:scaleX(1.0354);text-decoration:underline;text-decoration-color:rgba(196,122,72,0.45);">ProjectOthersBrowser</span>
<div style="position:absolute;left:0;top:0;width:752px;height:423px;transform:translate3d(0,0.400px,0) rotate(0.0001deg)"><span id="t138" class="t" style="left:379.80px;top:227.00px;font-size:4.6px;line-height:5.29px;color:#000;transform:scaleX(1.0512);-webkit-text-stroke:0.07px #000;">Module implementing a class used to display the parts of the project, that don&#x27;t fit the</span></div>
<div style="position:absolute;left:0;top:0;width:752px;height:423px;transform:translate3d(0,0.300px,0) rotate(0.0001deg)"><span id="t139" class="t" style="left:379.80px;top:232.00px;font-size:4.6px;line-height:5.29px;color:#000;transform:scaleX(1.0512);-webkit-text-stroke:0.07px #000;">other categories.</span></div>
<div style="position:absolute;left:0;top:0;width:752px;height:423px;transform:translate3d(0,0.500px,0) rotate(0.0001deg)"><span id="t140" class="t" style="left:302.30px;top:238.00px;font-size:4.6px;line-height:5.29px;color:#c47a48;transform:scaleX(1.0354);text-decoration:underline;text-decoration-color:rgba(196,122,72,0.45);">ProjectResourcesBrowser</span></div>
<div style="position:absolute;left:0;top:0;width:752px;height:423px;transform:translate3d(0,0.500px,0) rotate(0.0001deg)"><span id="t141" class="t" style="left:379.80px;top:238.00px;font-size:4.6px;line-height:5.29px;color:#000;transform:scaleX(1.0512);-webkit-text-stroke:0.07px #000;">Module implementing a class used to display the resources part of the project.</span></div>
<div style="position:absolute;left:0;top:0;width:752px;height:423px;transform:translate3d(0,0.560px,0) rotate(0.0001deg)"><span id="t142" class="t" style="left:302.30px;top:244.00px;font-size:4.6px;line-height:5.29px;color:#c47a48;transform:scaleX(1.0354);text-decoration:underline;text-decoration-color:rgba(196,122,72,0.45);">ProjectSourcesBrowser</span></div>
<div style="position:absolute;left:0;top:0;width:752px;height:423px;transform:translate3d(0,0.560px,0) rotate(0.0001deg)"><span id="t143" class="t" style="left:379.80px;top:244.00px;font-size:4.6px;line-height:5.29px;color:#000;transform:scaleX(1.0512);-webkit-text-stroke:0.07px #000;">Module implementing a class used to display the Sources part of the project.</span></div>
<div style="position:absolute;left:0;top:0;width:752px;height:423px;transform:translate3d(0,0.620px,0) rotate(0.0001deg)"><span id="t144" class="t" style="left:302.30px;top:250.00px;font-size:4.6px;line-height:5.29px;color:#c47a48;transform:scaleX(1.0354);text-decoration:underline;text-decoration-color:rgba(196,122,72,0.45);">ProjectTranslationsBrowser</span></div>
<div style="position:absolute;left:0;top:0;width:752px;height:423px;transform:translate3d(0,0.620px,0) rotate(0.0001deg)"><span id="t145" class="t" style="left:379.80px;top:250.00px;font-size:4.6px;line-height:5.29px;color:#000;transform:scaleX(1.0512);-webkit-text-stroke:0.07px #000;">Module implementing a class used to display the translations part of the project.</span></div>
<div style="position:absolute;left:0;top:0;width:752px;height:423px;transform:translate3d(0,0.680px,0) rotate(0.0001deg)"><span id="t146" class="t" style="left:302.30px;top:256.00px;font-size:4.6px;line-height:5.29px;color:#c47a48;transform:scaleX(1.0354);text-decoration:underline;text-decoration-color:rgba(196,122,72,0.45);">PropertiesDialog</span></div>
<div style="position:absolute;left:0;top:0;width:752px;height:423px;transform:translate3d(0,0.680px,0) rotate(0.0001deg)"><span id="t147" class="t" style="left:379.80px;top:256.00px;font-size:4.6px;line-height:5.29px;color:#000;transform:scaleX(1.0512);-webkit-text-stroke:0.07px #000;">Module implementing the project properties dialog.</span></div>
<div style="position:absolute;left:0;top:0;width:752px;height:423px;transform:translate3d(0,0.740px,0) rotate(0.0001deg)"><span id="t148" class="t" style="left:302.30px;top:262.00px;font-size:4.6px;line-height:5.29px;color:#c47a48;transform:scaleX(1.0354);text-decoration:underline;text-decoration-color:rgba(196,122,72,0.45);">SpellingPropertiesDialog</span></div>
<div style="position:absolute;left:0;top:0;width:752px;height:423px;transform:translate3d(0,0.740px,0) rotate(0.0001deg)"><span id="t149" class="t" style="left:379.80px;top:262.00px;font-size:4.6px;line-height:5.29px;color:#000;transform:scaleX(1.0512);-webkit-text-stroke:0.07px #000;">Module implementing the Spelling Properties dialog.</span></div>
<div style="position:absolute;left:0;top:0;width:752px;height:423px;transform:translate3d(0,0.800px,0) rotate(0.0001deg)"><span id="t150" class="t" style="left:302.30px;top:268.00px;font-size:4.6px;line-height:5.29px;color:#c47a48;transform:scaleX(1.0354);text-decoration:underline;text-decoration-color:rgba(196,122,72,0.45);">TranslationPropertiesDialog</span></div>
<div style="position:absolute;left:0;top:0;width:752px;height:423px;transform:translate3d(0,0.800px,0) rotate(0.0001deg)"><span id="t151" class="t" style="left:379.80px;top:268.00px;font-size:4.6px;line-height:5.29px;color:#000;transform:scaleX(1.0512);-webkit-text-stroke:0.07px #000;">Module implementing the Translations Properties dialog.</span></div>
<div style="position:absolute;left:0;top:0;width:752px;height:423px;transform:translate3d(0,0.860px,0) rotate(0.0001deg)"><span id="t152" class="t" style="left:302.30px;top:274.00px;font-size:4.6px;line-height:5.29px;color:#c47a48;transform:scaleX(1.0354);text-decoration:underline;text-decoration-color:rgba(196,122,72,0.45);">UserPropertiesDialog</span></div>
<div style="position:absolute;left:0;top:0;width:752px;height:423px;transform:translate3d(0,0.860px,0) rotate(0.0001deg)"><span id="t153" class="t" style="left:379.80px;top:274.00px;font-size:4.6px;line-height:5.29px;color:#000;transform:scaleX(1.0512);-webkit-text-stroke:0.07px #000;">Module implementing the user specific project properties dialog.</span></div>
</div>
</body></html>
